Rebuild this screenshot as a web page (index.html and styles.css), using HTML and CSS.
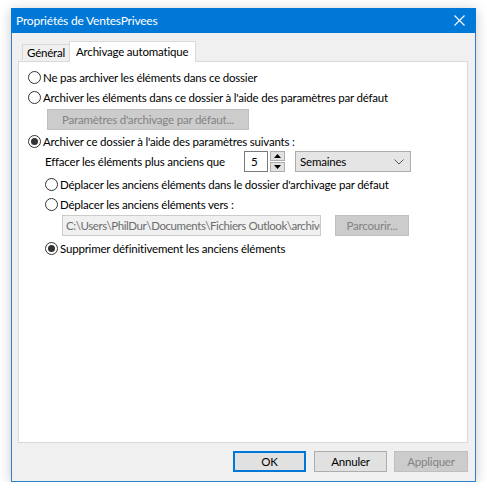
FILE: index.html
```html
<!DOCTYPE html>
<html lang="fr">
<head>
<meta charset="utf-8">
<title>Propriétés de VentesPrivees</title>
<link rel="stylesheet" href="styles.css">
</head>
<body>
<div class="window">
  <div class="titlebar">
    <span class="title">Propriétés de VentesPrivees</span>
    <svg class="close" width="11" height="11" viewBox="0 0 11 11"><path d="M0.5 0.5 L10.5 10.5 M10.5 0.5 L0.5 10.5" stroke="#fff" stroke-width="1.1" fill="none"/></svg>
  </div>
  <div class="body">
    <div class="tabs">
      <div class="tab">Général</div>
      <div class="tab active">Archivage automatique</div>
    </div>
    <div class="panel">
      <div class="row"><span class="radio"></span><span class="label">Ne pas archiver les éléments dans ce dossier</span></div>
      <div class="row"><span class="radio"></span><span class="label">Archiver les éléments dans ce dossier à l'aide des paramètres par défaut</span></div>
      <div class="btn disabled wide">Paramètres d'archivage par défaut...</div>
      <div class="row r3"><span class="radio on"></span><span class="label">Archiver ce dossier à l'aide des paramètres suivants :</span></div>
      <div class="erase">
        <span class="erase-label">Effacer les éléments plus anciens que</span>
        <span class="num">5</span>
        <span class="spin">
          <span class="spin-btn"><svg width="7" height="4" viewBox="0 0 7 4"><path d="M3.5 0 L7 4 L0 4 Z" fill="#000"/></svg></span>
          <span class="spin-btn"><svg width="7" height="4" viewBox="0 0 7 4"><path d="M0 0 L7 0 L3.5 4 Z" fill="#000"/></svg></span>
        </span>
        <span class="select">Semaines<svg class="chev" width="10" height="6" viewBox="0 0 10 6"><path d="M0.5 0.5 L5 5 L9.5 0.5" stroke="#555" fill="none"/></svg></span>
      </div>
      <div class="sub">
        <div class="row r4"><span class="radio"></span><span class="label">Déplacer les anciens éléments dans le dossier d'archivage par défaut</span></div>
        <div class="row"><span class="radio"></span><span class="label">Déplacer les anciens éléments vers :</span></div>
        <div class="path-row">
          <span class="path">C:\Users\PhilDur\Documents\Fichiers Outlook\archive</span>
          <span class="btn disabled browse">Parcourir...</span>
        </div>
        <div class="row r6"><span class="radio on"></span><span class="label">Supprimer définitivement les anciens éléments</span></div>
      </div>
    </div>
    <div class="footer">
      <span class="btn default">OK</span>
      <span class="btn">Annuler</span>
      <span class="btn disabled">Appliquer</span>
    </div>
  </div>
</div>
</body>
</html>
```
FILE: styles.css
```css
* { box-sizing: border-box; }
html, body { margin: 0; padding: 0; background: #ffffff; }
body {
  font-family: Lato, "Noto Sans", sans-serif;
  font-size: 11.5px;
  letter-spacing: -0.2px;
  color: #000;
  padding: 8px 0 0 11px;
}
.window {
  width: 465px;
  height: 474px;
  border: 1px solid #2f7fcf;
  background: #f0f0f0;
  box-shadow: 0 2px 12px rgba(0,0,0,0.22);
  display: flex;
  flex-direction: column;
}
.titlebar {
  background: #0078d7;
  display: flex;
  align-items: center;
  justify-content: space-between;
  padding: 0 10px 0 5px;
  color: #fff;
  margin: -1px -1px 0 -1px;
  height: 25px;
}
.title { font-size: 12px; letter-spacing: -0.2px; line-height: 1; white-space: nowrap; }
.close { display: block; margin-right: 1px; }
.body {
  flex: 1;
  display: flex;
  flex-direction: column;
  padding: 8px 7px 0 6px;
}
.tabs {
  display: flex;
  align-items: flex-end;
  height: 20px;
  padding-left: 4px;
  position: relative;
  z-index: 1;
  white-space: nowrap;
}
.tab {
  height: 16px;
  border: 1px solid #d9d9d9;
  border-bottom: none;
  background: #f0f0f0;
  padding: 0 4px;
  line-height: 15px;
  margin-bottom: 1px;
}
.tab.active {
  height: 21px;
  background: #fff;
  margin-bottom: -1px;
  padding: 0 7px 0 6px;
  line-height: 19px;
  margin-left: -1px;
}
.panel {
  height: 382px;
  background: #fff;
  border: 1px solid #d9d9d9;
  padding: 5px 0 0 9px;
  display: flex;
  flex-direction: column;
  align-items: flex-start;
}
.row {
  height: 20px;
  display: flex;
  align-items: center;
  white-space: nowrap;
}
.radio {
  width: 13px;
  height: 13px;
  border: 1px solid #333;
  border-radius: 50%;
  background: #fff;
  display: flex;
  align-items: center;
  justify-content: center;
  margin-right: 2px;
  flex: none;
}
.radio.on::after {
  content: "";
  width: 7px;
  height: 7px;
  border-radius: 50%;
  background: #333;
}
.btn {
  display: flex;
  align-items: center;
  justify-content: center;
  height: 21px;
  width: 73px;
  background: #e1e1e1;
  border: 1px solid #adadad;
  color: #000;
  white-space: nowrap;
}
.btn.disabled {
  background: #cccccc;
  border-color: #bfbfbf;
  color: #838383;
}
.btn.default { border: 2px solid #0078d7; }
.btn.wide { width: 202px; margin: 2px 0 0 19px; }
.r3 { margin-top: 1px; }
.erase {
  display: flex;
  align-items: center;
  height: 21px;
  margin: 0 0 0 17px;
  white-space: nowrap;
}
.erase-label { width: 199px; }
.num {
  width: 24px;
  height: 21px;
  border: 1px solid #7a7a7a;
  display: flex;
  align-items: center;
  padding-left: 6px;
}
.spin {
  display: flex;
  flex-direction: column;
  margin-left: 2px;
  height: 21px;
  justify-content: space-between;
}
.spin-btn {
  width: 15px;
  height: 10px;
  background: #e1e1e1;
  border: 1px solid #adadad;
  display: flex;
  align-items: center;
  justify-content: center;
}
.select {
  margin-left: 10px;
  width: 116px;
  height: 21px;
  background: #e5e5e5;
  border: 1px solid #acacac;
  display: flex;
  align-items: center;
  justify-content: space-between;
  padding: 0 6px 0 4px;
}
.chev { display: block; }
.sub {
  padding-left: 17px;
  display: flex;
  flex-direction: column;
  align-items: flex-start;
  margin-top: 2px;
}
.path-row {
  display: flex;
  align-items: center;
  margin: 1px 0 0 17px;
}
.path {
  width: 259px;
  height: 21px;
  background: #f0f0f0;
  border: 1px solid #cccccc;
  color: #6d6d6d;
  display: flex;
  align-items: center;
  padding-left: 3px;
  overflow: hidden;
  white-space: nowrap;
  letter-spacing: -0.4px;
}
.btn.browse { width: 74px; margin-left: 14px; }
.r6 { margin-top: 2px; }
.footer {
  display: flex;
  justify-content: flex-end;
  gap: 8px;
  padding-top: 8px;
}
.footer .btn:last-child { width: 74px; margin-left: -1px; }
```
